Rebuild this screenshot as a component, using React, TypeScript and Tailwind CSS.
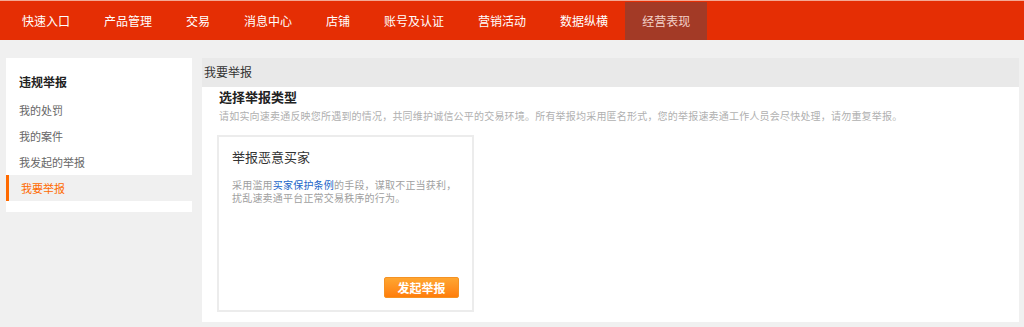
import React from "react";

const NAV_ITEMS = ["快速入口", "产品管理", "交易", "消息中心", "店铺", "账号及认证", "营销活动", "数据纵横", "经营表现"];
const ACTIVE_NAV = "经营表现";

const SIDE_ITEMS = ["我的处罚", "我的案件", "我发起的举报", "我要举报"];
const ACTIVE_SIDE = "我要举报";

const FONT = { fontFamily: '"Noto Sans CJK SC", "Noto Sans", sans-serif' };

const TopNav: React.FC = () => (
  <div className="h-[40px] bg-[#e52e04] border-t border-[#f3a894] flex pl-[5px]">
    {NAV_ITEMS.map((item) => (
      <div
        key={item}
        className={
          item === ACTIVE_NAV
            ? "px-[17px] mt-[1px] leading-[38px] text-[12px] text-[#f3d2c9] bg-[#a33a26]"
            : "px-[17px] leading-[39px] text-[12px] text-white"
        }
      >
        {item}
      </div>
    ))}
  </div>
);

const Sidebar: React.FC = () => (
  <div className="w-[186px] h-[154px] bg-white pt-[17px] pb-[12px]">
    <div className="pl-[13px] text-[12px] font-bold leading-[14px] text-[#222] mb-[8px]">违规举报</div>
    {SIDE_ITEMS.map((item) => {
      const active = item === ACTIVE_SIDE;
      return (
        <div
          key={item}
          className={
            active
              ? "h-[26px] leading-[26px] text-[11px] bg-[#f0f0f0] border-l-[3px] border-[#ff6a00] pl-[12px] text-[#ff6a00]"
              : "h-[26px] leading-[26px] text-[11px] pl-[13px] text-[#666]"
          }
        >
          {item}
        </div>
      );
    })}
  </div>
);

const ReportCard: React.FC = () => (
  <div className="w-[257px] h-[177px] border-2 border-[#ececec] flex flex-col px-[13px] pt-[13px] pb-[12px]">
    <div className="text-[13px] leading-[14px] text-[#333]">举报恶意买家</div>
    <p className="mt-[14px] text-[10px] leading-[13px] tracking-[0.2px] text-[#a0a0a0]">
      采用滥用<span className="text-[#1a66c8]">买家保护条例</span>的手段，谋取不正当获利，扰乱速卖通平台正常交易秩序的行为。
    </p>
    <button className="mt-auto self-end w-[75px] h-[21px] rounded-[2px] border border-[#f59223] bg-gradient-to-b from-[#ffa630] to-[#ff7d08] text-white text-[12px] font-bold leading-[19px]">
      发起举报
    </button>
  </div>
);

export default function App() {
  return (
    <div className="w-[1024px] h-[327px] bg-[#f0f0f0] overflow-hidden" style={FONT}>
      <TopNav />
      <div className="flex gap-[10px] pl-[6px] pt-[18px]">
        <Sidebar />
        <div className="w-[817px]">
          <div className="h-[29px] bg-[#e9e9e9] pl-[2px] text-[12px] leading-[27px] text-[#333]">我要举报</div>
          <div className="h-[235px] bg-white pl-[15px] pt-[3px]">
            <div className="pl-[2px] text-[13px] font-bold leading-[14px] text-[#222]">选择举报类型</div>
            <div className="pl-[2px] mt-[6px] text-[10px] leading-[12px] tracking-[0.2px] text-[#b0b0b0]">
              请如实向速卖通反映您所遇到的情况，共同维护诚信公平的交易环境。所有举报均采用匿名形式，您的举报速卖通工作人员会尽快处理，请勿重复举报。
            </div>
            <div className="mt-[13px]">
              <ReportCard />
            </div>
          </div>
        </div>
      </div>
    </div>
  );
}
